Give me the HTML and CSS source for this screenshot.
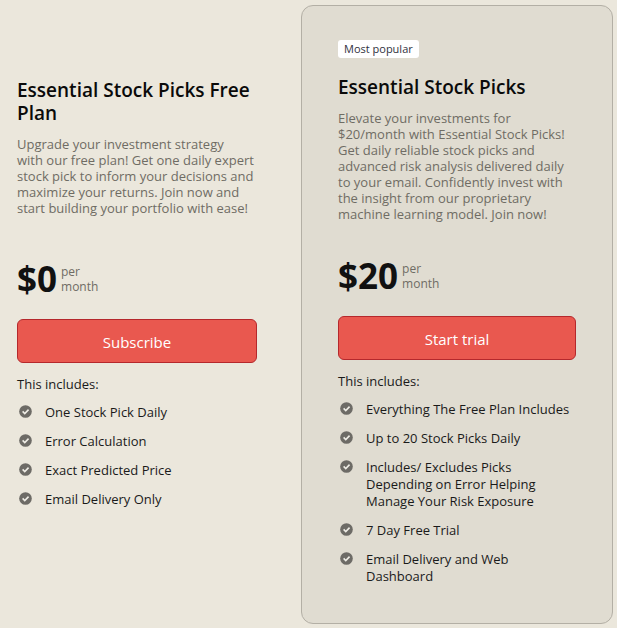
FILE: index.html
```html
<!DOCTYPE html>
<html lang="en">
<head>
    <meta charset="UTF-8">
    <meta name="viewport" content="width=device-width, initial-scale=1.0">
    <title>Essential Stock Picks</title>
    <link rel="stylesheet" href="styles.css">
</head>
<body>
    <svg class="sprite" aria-hidden="true">
        <symbol id="check" viewBox="0 0 14 14">
            <circle cx="7" cy="7" r="6.8" fill="#6d6b66"/>
            <path d="M3.9 6.9l2.3 2.3 4.1-4.2" fill="none" stroke="#efede6" stroke-width="1.7"/>
        </symbol>
    </svg>

    <main class="pricing">
        <section class="plan">
            <div class="intro">
                <h2>Essential Stock Picks Free Plan</h2>
                <p class="description">Upgrade your investment strategy with&nbsp;our free plan! Get one daily expert stock pick to inform your decisions and maximize your returns. Join now and start building your portfolio with ease!</p>
            </div>
            <div class="price">
                <span class="amount">$0</span>
                <span class="period">per<br>month</span>
            </div>
            <button type="button">Subscribe</button>
            <p class="includes">This includes:</p>
            <ul class="features">
                <li><svg class="icon"><use href="#check"/></svg><span>One Stock Pick Daily</span></li>
                <li><svg class="icon"><use href="#check"/></svg><span>Error Calculation</span></li>
                <li><svg class="icon"><use href="#check"/></svg><span>Exact Predicted Price</span></li>
                <li><svg class="icon"><use href="#check"/></svg><span>Email Delivery Only</span></li>
            </ul>
        </section>

        <section class="plan featured">
            <span class="badge">Most popular</span>
            <div class="intro">
                <h2>Essential Stock Picks</h2>
                <p class="description">Elevate your investments for $20/month with Essential Stock Picks! Get daily reliable stock picks and advanced risk analysis delivered daily to your email. Confidently invest with the insight from our proprietary machine learning model. Join now!</p>
            </div>
            <div class="price">
                <span class="amount">$20</span>
                <span class="period">per<br>month</span>
            </div>
            <button type="button">Start trial</button>
            <p class="includes">This includes:</p>
            <ul class="features">
                <li><svg class="icon"><use href="#check"/></svg><span>Everything The Free Plan Includes</span></li>
                <li><svg class="icon"><use href="#check"/></svg><span>Up to 20 Stock Picks Daily</span></li>
                <li><svg class="icon"><use href="#check"/></svg><span>Includes/ Excludes Picks Depending on Error Helping Manage Your Risk Exposure</span></li>
                <li><svg class="icon"><use href="#check"/></svg><span>7 Day Free Trial</span></li>
                <li><svg class="icon"><use href="#check"/></svg><span>Email Delivery and Web Dashboard</span></li>
            </ul>
        </section>
    </main>
</body>
</html>
```
FILE: styles.css
```css
* {
    box-sizing: border-box;
}
body {
    margin: 0;
    background-color: #ebe7dc;
    color: #1a1a1a;
    font-family: "Open Sans", "Noto Sans", sans-serif;
    font-size: 13px;
    line-height: 17px;
}
h2, p, ul {
    margin: 0;
    padding: 0;
}
.sprite {
    display: none;
}
.pricing {
    display: grid;
    grid-template-columns: 10fr 13fr;
    column-gap: 44px;
    padding: 5px 4px 4px 17px;
}
.plan {
    display: flex;
    flex-direction: column;
    padding-top: 74px;
}
.featured {
    padding: 34px 36px 38px;
    background-color: #e0dcd1;
    border: 1px solid #b3afa5;
    border-radius: 12px;
}
.badge {
    align-self: flex-start;
    margin-bottom: 18px;
    padding: 0 6px;
    background-color: #fff;
    border-radius: 3px;
    color: #30313d;
    font-size: 11px;
    line-height: 18px;
}
.intro {
    min-height: 146px;
}
h2 {
    margin-bottom: 11px;
    color: #0a0a0a;
    font-size: 19px;
    font-weight: 600;
    line-height: 23px;
}
.description {
    color: #6f6c64;
    line-height: 16px;
}
.price {
    display: flex;
    align-items: center;
    gap: 4px;
    margin: 39px 0 25px;
}
.amount {
    color: #111;
    font-size: 35px;
    font-weight: 700;
    line-height: 30px;
}
.period {
    color: #6f6c64;
    font-size: 12px;
    line-height: 15px;
}
button {
    width: 100%;
    height: 44px;
    padding: 2px 0 0;
    background-color: #e9584f;
    border: 1px solid #b5282c;
    border-radius: 6px;
    color: #fff;
    font-family: inherit;
    font-size: 15px;
    cursor: pointer;
}
.includes {
    margin: 13px 0 11px;
}
.features {
    display: grid;
    gap: 12px;
    list-style: none;
}
.features li {
    display: flex;
    gap: 13px;
}
.icon {
    flex: none;
    width: 13px;
    height: 13px;
    margin: 1px 0 0 2px;
}
```
